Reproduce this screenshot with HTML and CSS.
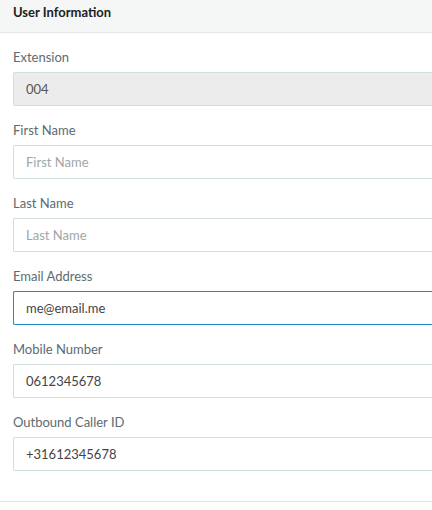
FILE: index.html
```html
<!DOCTYPE html>
<html>
<head>
<meta charset="utf-8">
<link rel="stylesheet" href="styles.css">
</head>
<body>
<div class="panel">
  <div class="panel-heading">User Information</div>
  <form class="panel-body">
    <div class="field">
      <label class="label">Extension</label>
      <input class="input input-disabled" type="text" value="004" disabled>
    </div>
    <div class="field">
      <label class="label">First Name</label>
      <input class="input" type="text" placeholder="First Name">
    </div>
    <div class="field">
      <label class="label">Last Name</label>
      <input class="input" type="text" placeholder="Last Name">
    </div>
    <div class="field">
      <label class="label">Email Address</label>
      <input class="input input-focus" type="text" value="me@email.me">
    </div>
    <div class="field">
      <label class="label">Mobile Number</label>
      <input class="input" type="text" value="0612345678">
    </div>
    <div class="field">
      <label class="label">Outbound Caller ID</label>
      <input class="input" type="text" value="+31612345678">
    </div>
  </form>
</div>
</body>
</html>
```
FILE: styles.css
```css
html, body {
  margin: 0;
  padding: 0;
  background: #ffffff;
  overflow: hidden;
}
body {
  font-family: "Lato", "Liberation Sans", sans-serif;
  font-size: 13px;
  color: #333;
}
.panel {
  width: 100%;
  border-bottom: 1px solid #dfe5e5;
}
.panel-heading {
  height: 33px;
  box-sizing: border-box;
  padding: 4px 13px 0;
  line-height: 16px;
  background: #f5f6f6;
  border-bottom: 1px solid #e3e8e8;
  font-weight: bold;
  font-size: 13px;
  color: #222;
}
.panel-body {
  margin: 0;
  padding: 15px 0 30px 13px;
  display: flex;
  flex-direction: column;
  gap: 15px;
}
.field {
  display: flex;
  flex-direction: column;
}
.label {
  display: block;
  line-height: 18px;
  margin-bottom: 6px;
  color: #5b6b71;
  font-size: 13px;
}
.input {
  box-sizing: border-box;
  width: 100%;
  height: 34px;
  margin: 0;
  padding: 0 12px;
  font-family: inherit;
  font-size: 13px;
  color: #444;
  background: #fff;
  border: 1px solid #d3dede;
  border-right: none;
  border-radius: 2px 0 0 2px;
  outline: none;
}
.input::placeholder {
  color: #a0a6a8;
}
.input-disabled {
  background: #ececec;
  color: #555;
  -webkit-text-fill-color: #555;
  opacity: 1;
}
.input-focus {
  border-color: #1a91c4;
}
```
